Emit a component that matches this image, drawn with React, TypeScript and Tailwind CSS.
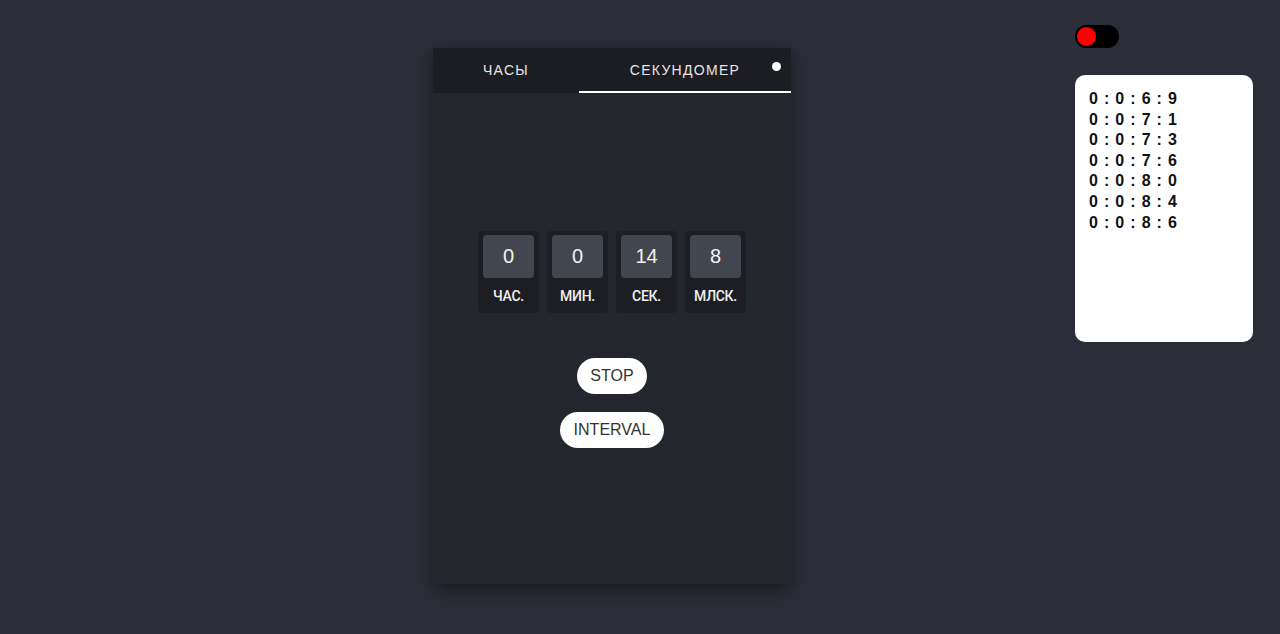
const units = [
  { value: "0", label: "час." },
  { value: "0", label: "мин." },
  { value: "14", label: "сек." },
  { value: "8", label: "млск." },
];

const laps = ["0 : 0 : 6 : 9", "0 : 0 : 7 : 1", "0 : 0 : 7 : 3", "0 : 0 : 7 : 6", "0 : 0 : 8 : 0", "0 : 0 : 8 : 4", "0 : 0 : 8 : 6"];

function TimeBlock({ value, label }: { value: string; label: string }) {
  return (
    <div className="flex w-[61px] flex-col items-center rounded-[4px] bg-[#1c1e23] px-[5px] pt-[4px] pb-[8px]">
      <div className="flex h-[43px] w-full items-center justify-center rounded-[4px] bg-[#42464e] text-[20px] text-[#f2f2f2]">
        {value}
      </div>
      <span className="mt-[9px] font-['Roboto',sans-serif] text-[14px] leading-[18px] font-medium tracking-[-0.3px] text-[#f0f0f0] uppercase">
        {label}
      </span>
    </div>
  );
}

export default function App() {
  return (
    <div className="flex min-h-[634px] w-full items-start bg-[#2b2e38] font-['Liberation_Sans',Arial,sans-serif]">
      {/* Stopwatch card */}
      <div className="mt-[48px] ml-[433px] flex h-[536px] w-[358px] flex-col bg-[#23262d] shadow-[0_6px_16px_rgba(0,0,0,0.45)]">
        <div className="relative flex h-[45px] bg-[#1b1d22] text-[14px] tracking-[1.3px] text-[#e6e6e6] uppercase">
          <div className="flex w-[146px] items-center justify-center">часы</div>
          <div className="flex flex-1 items-center justify-center border-b-2 border-white pt-[2px]">
            секундомер
          </div>
          <span className="absolute top-[14px] right-[10px] h-[9px] w-[9px] rounded-full bg-white" />
        </div>

        <div className="flex flex-1 flex-col items-center justify-center pt-[1px]">
          <div className="flex gap-[8px]">
            {units.map((u) => (
              <TimeBlock key={u.label} value={u.value} label={u.label} />
            ))}
          </div>
          <button className="mt-[45px] h-[36px] rounded-full bg-white px-[13px] text-[16px] text-[#333]">
            STOP
          </button>
          <button className="mt-[18px] h-[36px] rounded-full bg-white px-[14px] text-[16px] text-[#333]">
            INTERVAL
          </button>
        </div>
      </div>

      {/* Lap side panel */}
      <div className="mt-[25px] mr-[27px] ml-auto flex w-[178px] flex-col">
        <div className="flex h-[23px] w-[44px] items-center rounded-full bg-black px-[2px]">
          <span className="h-[19px] w-[19px] rounded-full bg-[#ff0000]" />
        </div>
        <div className="mt-[27px] h-[267px] rounded-[10px] bg-white px-[14px] pt-[14px]">
          {laps.map((lap, i) => (
            <div key={i} className="text-[16px] leading-[20.6px] font-bold tracking-[0.8px] whitespace-pre text-[#111]">
              {lap}
            </div>
          ))}
        </div>
      </div>
    </div>
  );
}
